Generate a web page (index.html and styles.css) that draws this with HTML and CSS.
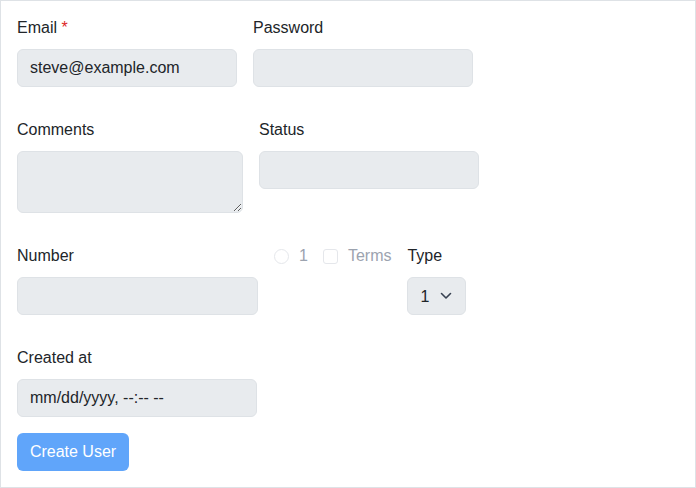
FILE: index.html
```html
<!DOCTYPE html>
<html>
<head>
<meta charset="utf-8">
<link rel="stylesheet" href="styles.css">
</head>
<body>
<form class="card">
  <div class="row">
    <div class="field">
      <label class="label">Email <span class="req">*</span></label>
      <input class="control w220" type="email" value="steve@example.com">
    </div>
    <div class="field">
      <label class="label">Password</label>
      <input class="control w220" type="password">
    </div>
  </div>
  <div class="row">
    <div class="field">
      <label class="label">Comments</label>
      <textarea class="control area"></textarea>
    </div>
    <div class="field">
      <label class="label">Status</label>
      <input class="control w220" type="text">
    </div>
  </div>
  <div class="row">
    <div class="field">
      <label class="label">Number</label>
      <input class="control w241" type="number">
    </div>
    <div class="options">
      <label class="option"><input type="radio" class="radio"><span>1</span></label>
      <label class="option"><input type="checkbox" class="check"><span>Terms</span></label>
    </div>
    <div class="field">
      <label class="label">Type</label>
      <div class="select-wrap">
        <select class="control select"><option>1</option></select>
        <svg class="chev" width="12" height="8" viewBox="0 0 12 8"><path d="M1.5 1.5 L6 6 L10.5 1.5" fill="none" stroke="#374151" stroke-width="1.6" stroke-linecap="round" stroke-linejoin="round"/></svg>
      </div>
    </div>
  </div>
  <div class="row last">
    <div class="field">
      <label class="label">Created at</label>
      <div class="control w240 dt">mm/dd/yyyy, --:-- --</div>
    </div>
  </div>
  <div>
    <button type="button" class="btn">Create User</button>
  </div>
</form>
</body>
</html>
```

FILE: styles.css
```css
* { box-sizing: border-box; }
html, body { margin: 0; padding: 0; background: #fff; }
body {
  font-family: "Liberation Sans", Arial, sans-serif;
  font-size: 16px;
  color: #212529;
}
.card {
  width: 696px;
  height: 488px;
  border: 1px solid #dee2e6;
  padding: 16px;
  margin: 0;
}
.row {
  display: flex;
  gap: 16px;
  align-items: flex-start;
  margin-bottom: 32px;
}
.row.last { margin-bottom: 16px; }
.field {
  display: flex;
  flex-direction: column;
}
.label {
  display: block;
  line-height: 20px;
  height: 21px;
  padding-top: 1px;
  margin-bottom: 11px;
}
.req { color: #dc2626; }
.control {
  height: 38px;
  padding: 0 12px;
  border: 1px solid #dee2e6;
  border-radius: 6px;
  background: #e8ebee;
  font-family: "Liberation Sans", Arial, sans-serif;
  font-size: 16px;
  color: #212529;
  margin: 0;
  outline: none;
}
.w220 { width: 220px; }
.w241 { width: 241px; }
.w240 { width: 240px; }
.area {
  width: 226px;
  height: 62px;
  padding: 8px 12px;
  resize: vertical;
  display: block;
}
.dt {
  display: flex;
  align-items: center;
}
.options {
  display: flex;
  align-items: center;
  gap: 15px;
  height: 21px;
  padding-top: 1px;
  color: #9ca3af;
  line-height: 20px;
}
.option {
  display: flex;
  align-items: center;
  gap: 10px;
}
.radio, .check {
  -webkit-appearance: none;
  appearance: none;
  margin: 0;
  width: 15px;
  height: 15px;
  border: 1px solid #e5e7eb;
  background: #fff;
}
.radio { border-radius: 50%; }
.check { border-radius: 3px; }
.select-wrap {
  position: relative;
  width: 59px;
}
.select {
  -webkit-appearance: none;
  appearance: none;
  width: 59px;
  padding: 0 12px;
}
.chev {
  position: absolute;
  left: 33px;
  top: 15px;
  pointer-events: none;
}
.btn {
  height: 38px;
  width: 112px;
  padding: 0 12px 1px;
  border: none;
  border-radius: 6px;
  background: #60a5fa;
  color: #fff;
  font-family: "Liberation Sans", Arial, sans-serif;
  font-size: 16px;
}
```
